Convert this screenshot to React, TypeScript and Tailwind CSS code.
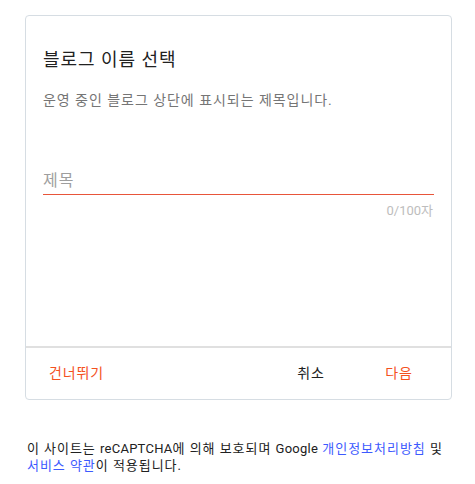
import { useState } from 'react';

const FONT = "font-['Roboto','Noto_Sans_CJK_KR',sans-serif] tracking-[0.06em]";

const BlogNameCard = () => {
    const [title, setTitle] = useState('');

    return (
        <div className="ml-[25px] mt-[15px] w-[427px] rounded-[4px] border border-[#d6dde3] bg-white">
            {/* 본문 */}
            <div className="h-[330px] px-[17px] pt-[32px]">
                <h2 className="text-[18px] leading-6 text-[#212121]">블로그 이름 선택</h2>
                <p className="mt-[18px] text-[14px] leading-5 text-[#757575]">
                    운영 중인 블로그 상단에 표시되는 제목입니다.
                </p>

                <div className="mt-[58px]">
                    <input
                        type="text"
                        value={title}
                        maxLength={100}
                        onChange={(e) => setTitle(e.target.value)}
                        placeholder="제목"
                        className="block h-[27px] w-full border-b border-[#e8553a] pb-[2px] text-[16px] leading-6 tracking-[0.06em] text-[#212121] outline-none placeholder:text-[#9e9e9e]"
                    />
                    <div className="mt-[8px] text-right text-[13px] leading-4 text-[#bdbdbd]">
                        <span className="tracking-normal">{title.length}/100</span>자
                    </div>
                </div>
            </div>

            {/* 버튼 영역 */}
            <div className="flex h-[53px] items-center border-t-2 border-[#e0e0e0] pl-[23px] pr-[20px] text-[14px]">
                <button type="button" className="tracking-[0.06em] text-[#f4511e]">건너뛰기</button>
                <button type="button" className="ml-auto w-[64px] text-center tracking-[0.06em] text-[#212121]">취소</button>
                <button type="button" className="ml-[24px] w-[64px] text-center tracking-[0.06em] text-[#f4511e]">다음</button>
            </div>
        </div>
    );
};

export default function App() {
    return (
        <div className={`${FONT} min-h-[484px] w-[475px] bg-white`}>
            <BlogNameCard />
            <p className="ml-[27px] mt-[40px] w-[430px] text-[13px] leading-[17px] text-[#212121]">
                이 사이트는 <span className="tracking-[0.02em]">reCAPTCHA</span>에 의해 보호되며{' '}
                <span className="tracking-[0.02em]">Google</span>{' '}
                <a className="text-[#3d5afe]">개인정보처리방침</a> 및{' '}
                <a className="text-[#3d5afe]">서비스 약관</a>이 적용됩니다.
            </p>
        </div>
    );
}
